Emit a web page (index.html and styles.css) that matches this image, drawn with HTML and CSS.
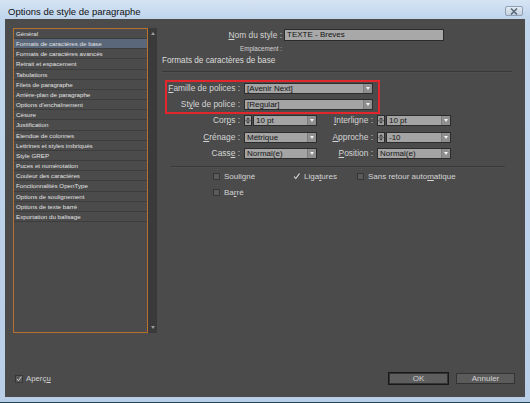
FILE: index.html
```html
<!DOCTYPE html>
<html lang="fr">
<head>
    <meta charset="UTF-8">
    <meta name="viewport" content="width=device-width, initial-scale=1.0">
    <title>Options de style de paragraphe</title>
    <link rel="stylesheet" href="styles.css">
</head>
<body>
    <div class="window">
        <header class="titlebar">
            <span class="title">Options de style de paragraphe</span>
            <span class="close">
                <svg width="10" height="7" viewBox="0 0 10 7"><path d="M2 0.5 L8 6.5 M8 0.5 L2 6.5" stroke="#5c6b7c" stroke-width="1.6"/></svg>
            </span>
        </header>
        <div class="client">
            <div class="main">
                <aside class="sidebar">
                    <ul class="cat-list">
                        <li>Général</li>
                        <li class="selected">Formats de caractères de base</li>
                        <li>Formats de caractères avancés</li>
                        <li>Retrait et espacement</li>
                        <li>Tabulations</li>
                        <li>Filets de paragraphe</li>
                        <li>Arrière-plan de paragraphe</li>
                        <li>Options d'enchaînement</li>
                        <li>Césure</li>
                        <li>Justification</li>
                        <li>Etendue de colonnes</li>
                        <li>Lettrines et styles imbriqués</li>
                        <li>Style GREP</li>
                        <li>Puces et numérotation</li>
                        <li>Couleur des caractères</li>
                        <li>Fonctionnalités OpenType</li>
                        <li>Options de soulignement</li>
                        <li>Options de texte barré</li>
                        <li>Exportation du balisage</li>
                    </ul>
                    <div class="scrollbar">
                        <span class="arrow up"></span>
                        <span class="arrow down"></span>
                    </div>
                </aside>

                <section class="panel">
                    <div class="name-row">
                        <label class="name-label"><u>N</u>om du style :</label>
                        <div class="text-field">TEXTE - Breves</div>
                    </div>
                    <div class="location-row">Emplacement :</div>
                    <div class="section-title">Formats de caractères de base</div>
                    <div class="rule"></div>

                    <div class="font-box">
                        <div class="form-row">
                            <label class="label"><u>F</u>amille de polices :</label>
                            <div class="select"><span class="value">[Avenir Next]</span><span class="drop"></span></div>
                        </div>
                        <div class="form-row">
                            <label class="label">St<u>y</u>le de police :</label>
                            <div class="select"><span class="value">[Regular]</span><span class="drop"></span></div>
                        </div>
                    </div>

                    <div class="metrics">
                        <label class="label">Cor<u>p</u>s :</label>
                        <div class="spin-field">
                            <span class="spin"><svg width="6" height="9" viewBox="0 0 6 9"><path d="M1 3.5 L3 1.5 L5 3.5 Z M1 5.5 L5 5.5 L3 7.5 Z" fill="#2e2e2e"/><path d="M0 4.5 H6" stroke="#6e6e6e" stroke-width="1"/></svg></span>
                            <div class="select"><span class="value">10 pt</span><span class="drop"></span></div>
                        </div>
                        <label class="label"><u>I</u>nterligne :</label>
                        <div class="spin-field">
                            <span class="spin"><svg width="6" height="9" viewBox="0 0 6 9"><path d="M1 3.5 L3 1.5 L5 3.5 Z M1 5.5 L5 5.5 L3 7.5 Z" fill="#2e2e2e"/><path d="M0 4.5 H6" stroke="#6e6e6e" stroke-width="1"/></svg></span>
                            <div class="select"><span class="value">10 pt</span><span class="drop"></span></div>
                        </div>

                        <label class="label"><u>C</u>rénage :</label>
                        <div class="select"><span class="value">Métrique</span><span class="drop"></span></div>
                        <label class="label"><u>A</u>pproche :</label>
                        <div class="spin-field">
                            <span class="spin"><svg width="6" height="9" viewBox="0 0 6 9"><path d="M1 3.5 L3 1.5 L5 3.5 Z M1 5.5 L5 5.5 L3 7.5 Z" fill="#2e2e2e"/><path d="M0 4.5 H6" stroke="#6e6e6e" stroke-width="1"/></svg></span>
                            <div class="select"><span class="value">-10</span><span class="drop"></span></div>
                        </div>

                        <label class="label">Cass<u>e</u> :</label>
                        <div class="select"><span class="value">Normal(e)</span><span class="drop"></span></div>
                        <label class="label"><u>P</u>osition :</label>
                        <div class="select"><span class="value">Normal(e)</span><span class="drop"></span></div>
                    </div>

                    <div class="rule short"></div>

                    <div class="checks">
                        <label class="check"><span class="box"></span><span>Souli<u>g</u>né</span></label>
                        <label class="check"><span class="box checked"><svg width="7" height="7" viewBox="0 0 7 7"><path d="M1 3.5 L2.8 5.5 L6.5 0.5" fill="none" stroke="#e4e4e4" stroke-width="1.1"/></svg></span><span>Liga<u>t</u>ures</span></label>
                        <label class="check"><span class="box"></span><span>Sans retour auto<u>m</u>atique</span></label>
                        <label class="check"><span class="box"></span><span>Ba<u>r</u>ré</span></label>
                    </div>
                </section>
            </div>

            <footer class="footer">
                <label class="check preview"><span class="box checked"><svg width="8" height="8" viewBox="0 0 8 8"><path d="M1.2 4 L3.2 6.2 L7.2 0.8" fill="none" stroke="#e4e4e4" stroke-width="1.1"/></svg></span><span>Aperç<u>u</u></span></label>
                <button class="btn default">OK</button>
                <button class="btn">Annuler</button>
            </footer>
        </div>
    </div>
</body>
</html>
```

FILE: styles.css
```css
* {
    box-sizing: border-box;
}

body {
    margin: 0;
    width: 530px;
    height: 403px;
    overflow: hidden;
    font-family: "Liberation Sans", Arial, sans-serif;
    background: #1f4652;
}

.window {
    width: 530px;
    height: 402px;
    display: flex;
    flex-direction: column;
    padding: 0 5px 5px 5px;
    background: linear-gradient(#d6e4f4, #c0d5ec 18px, #b9cfe8);
}

.titlebar {
    height: 19px;
    display: flex;
    align-items: center;
    justify-content: space-between;
    padding: 3px 2px 0 3px;
}

.title {
    font-size: 9.5px;
    color: #111;
}

.close {
    width: 18px;
    height: 10px;
    display: flex;
    align-items: center;
    justify-content: center;
    border: 1px solid #8ea0b6;
    border-radius: 2px;
    background: linear-gradient(#e4ebf3, #c3d0de);
}

.client {
    flex: 1;
    display: flex;
    flex-direction: column;
    background: #4b4b4b;
    color: #d4d4d4;
}

.main {
    flex: 1;
    display: flex;
    padding: 9px 13px 0 8px;
}

u {
    text-decoration-thickness: 1px;
    text-underline-offset: 1px;
}

/* category list */
.sidebar {
    display: flex;
    height: 305px;
}

.cat-list {
    width: 135px;
    margin: 0;
    padding: 0;
    list-style: none;
    border: 1px solid #b5722e;
}

.cat-list li {
    height: 10.17px;
    line-height: 9.17px;
    padding-left: 2px;
    border-bottom: 1px solid #3d3d3d;
    font-size: 6.2px;
    color: #e2e2e2;
    white-space: nowrap;
}

.cat-list li.selected {
    background: #5a677a;
}

.scrollbar {
    width: 9px;
    display: flex;
    flex-direction: column;
    justify-content: space-between;
    align-items: center;
    padding: 4px 0;
    background: #3a3a3a;
}

.arrow {
    width: 0;
    height: 0;
    border-left: 2.5px solid transparent;
    border-right: 2.5px solid transparent;
}

.arrow.up {
    border-bottom: 3px solid #9a9a9a;
}

.arrow.down {
    border-top: 3px solid #9a9a9a;
}

/* right panel */
.panel {
    flex: 1;
    margin-left: 5px;
    font-size: 8.4px;
}

.name-row {
    display: flex;
    gap: 2px;
    height: 12px;
    margin-top: 1px;
}

.name-label {
    width: 120px;
    line-height: 12px;
    text-align: right;
}

.text-field {
    width: 160px;
    height: 12px;
    padding-left: 2px;
    line-height: 10px;
    font-size: 8px;
    color: #141414;
    background: #a8a8a8;
    border: 1px solid #2b2b2b;
}

.location-row {
    width: 120px;
    height: 12px;
    margin-top: 2px;
    line-height: 12px;
    text-align: right;
    font-size: 6.3px;
}

.section-title {
    height: 12px;
    line-height: 12px;
    font-size: 8.2px;
    color: #dcdcdc;
}

.rule {
    height: 2px;
    margin-top: 4px;
    border-top: 1px solid #393939;
    border-bottom: 1px solid #505050;
}

.rule.short {
    width: 335px;
    margin: 7px 0 0 8px;
}

.font-box {
    width: 215px;
    margin: 7px 0 0 3px;
    padding: 1px 5px 2px 0;
    border: 2px solid #e3252c;
}

.form-row {
    display: flex;
    gap: 4px;
    height: 11px;
}

.form-row + .form-row {
    margin-top: 5px;
}

.label {
    line-height: 11px;
    text-align: right;
    white-space: nowrap;
}

.form-row .label {
    width: 73px;
}

.select {
    flex: 1;
    display: flex;
    height: 11px;
    background: #a4a4a4;
    border: 1px solid #2c2c2c;
    font-size: 8px;
    line-height: 9px;
    color: #151515;
}

.select .value {
    flex: 1;
    padding-left: 2px;
    white-space: nowrap;
    overflow: hidden;
}

.drop {
    width: 9px;
    display: flex;
    align-items: center;
    justify-content: center;
    background: #8f8f8f;
    border-left: 1px solid #7c7c7c;
}

.drop::before {
    content: "";
    border-left: 2.5px solid transparent;
    border-right: 2.5px solid transparent;
    border-top: 3px solid #f2f2f2;
}

.metrics {
    display: grid;
    grid-template-columns: 73px 73px 52px 74px;
    grid-auto-rows: 11px;
    column-gap: 4px;
    row-gap: 5.5px;
    margin: 1px 0 0 5px;
}

.spin-field {
    display: flex;
    gap: 1px;
}

.spin {
    width: 8px;
    height: 11px;
    display: flex;
    align-items: center;
    justify-content: center;
    background: #9e9e9e;
    border: 1px solid #2c2c2c;
}

/* checkboxes */
.checks {
    display: grid;
    grid-template-columns: 80px 64px auto;
    grid-auto-rows: 16px;
    padding-left: 51px;
    font-size: 8px;
}

.check {
    display: flex;
    align-items: center;
    gap: 4px;
    white-space: nowrap;
}

.box {
    width: 7px;
    height: 7px;
    display: flex;
    align-items: center;
    justify-content: center;
    background: #5a5a5a;
    border: 1px solid #373737;
}

.box.checked {
    background: none;
    border: none;
}

/* footer */
.footer {
    height: 25px;
    display: flex;
    align-items: center;
    padding: 0 10px 12px 10px;
    font-size: 7.8px;
}

.preview {
    gap: 3px;
}

.preview .box {
    width: 8px;
    height: 8px;
    background: #5a5a5a;
    border: 1px solid #373737;
}

.btn {
    width: 59px;
    height: 11px;
    padding: 0;
    font-family: "Liberation Sans", Arial, sans-serif;
    font-size: 8px;
    line-height: 9px;
    color: #d2d2d2;
    background: #5b5b5b;
    border: 1px solid #333;
}

.btn.default {
    margin-left: auto;
    margin-right: 8px;
    background: #5e5e5e;
    box-shadow: 0 0 0 1px #181818;
}
```
